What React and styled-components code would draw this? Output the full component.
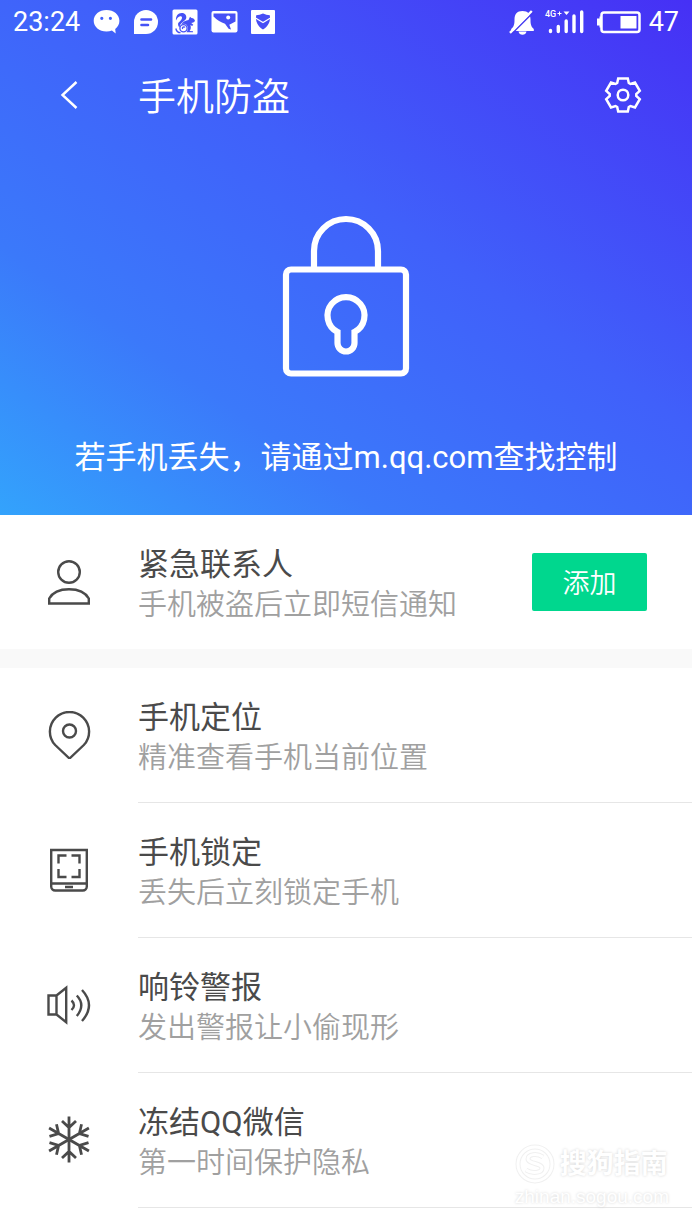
import React from "react";
import styled, { createGlobalStyle } from "styled-components";

const GlobalStyle = createGlobalStyle`
  *, *::before, *::after { box-sizing: border-box; }
  body {
    margin: 0;
    background: #fff;
    font-family: Roboto, "Noto Sans CJK SC", sans-serif;
  }
`;

const Page = styled.div`
  position: relative;
  min-height: 100vh;
  overflow: hidden;
  background: #fff;
`;

const Hero = styled.header`
  display: flex;
  flex-direction: column;
  padding-bottom: 37px;
  color: #fff;
  background: linear-gradient(35deg, #33a3fc 0%, #3b79fa 27%, #4060fa 57%, #4630f5 100%);
`;

const StatusBar = styled.div`
  display: flex;
  align-items: center;
  justify-content: space-between;
  height: 44px;
  padding: 0 13px;
  font-size: 27px;
  line-height: 44px;
  font-weight: 400;
`;

const StatusGroup = styled.div`
  display: flex;
  align-items: center;
  gap: ${(p) => p.$gap}px;
`;

const NavBar = styled.nav`
  display: grid;
  grid-template-columns: 138px 1fr 138px;
  align-items: center;
  height: 102px;
`;

const Title = styled.h1`
  margin: 0;
  padding-top: 4px;
  font-size: 38px;
  line-height: 56px;
  font-weight: 350;
`;

const IconButton = styled.button`
  display: flex;
  justify-self: center;
  padding: 8px;
  border: 0;
  background: none;
  color: inherit;
  cursor: pointer;
`;

const LockArt = styled.div`
  display: flex;
  justify-content: center;
  padding: 69px 0 61px;
`;

const Hint = styled.p`
  margin: 0;
  font-size: 31px;
  line-height: 40px;
  font-weight: 400;
  text-align: center;
`;

const List = styled.ul`
  margin: 0;
  padding: 0;
  list-style: none;
`;

const RowIcon = styled.div`
  display: flex;
  align-items: center;
  justify-content: center;
  color: #4a4a4a;
`;

const Row = styled.div`
  display: grid;
  grid-template-columns: 138px 1fr;
  height: 134px;
`;

const FeatureRow = styled(Row).attrs({ as: "li" })`
  height: 135px;

  ${RowIcon} {
    padding-bottom: 1px;
  }
`;

const RowBody = styled.div`
  display: flex;
  align-items: center;
  justify-content: space-between;
  padding-right: 45px;
  border-bottom: ${(p) => (p.$divided ? "1px solid #e6e6e6" : "0")};
`;

const RowText = styled.div`
  padding-top: 6px;
`;

const RowTitle = styled.h2`
  margin: 0;
  font-size: 31px;
  line-height: 40px;
  font-weight: 400;
  color: #4a4a4a;
`;

const RowNote = styled.p`
  margin: 0;
  font-size: 29px;
  line-height: 40px;
  font-weight: 350;
  color: #a0a0a0;
`;

const AddButton = styled.button`
  width: 115px;
  height: 58px;
  padding: 4px 0 0;
  border: 0;
  border-radius: 2px;
  background: #00d78e;
  color: #fff;
  font: 350 27px/54px Roboto, "Noto Sans CJK SC", sans-serif;
  cursor: pointer;
`;

const Band = styled.div`
  height: 19px;
  background: #f9f9f9;
`;

const Watermark = styled.div`
  position: absolute;
  right: 23px;
  bottom: 20px;
  display: flex;
  flex-direction: column;
  color: #fff;
  text-shadow: 0 0 3px #d4d4d4;
  pointer-events: none;
`;

const WatermarkBrand = styled.div`
  display: flex;
  align-items: center;
  gap: 5px;
  font-size: 27px;
  line-height: 40px;
  font-weight: 700;
`;

const WatermarkSite = styled.div`
  font: 400 19px/26px "Liberation Sans", sans-serif;
`;

const ChatIcon = () => (
  <svg width="27" height="26" viewBox="0 0 27 26" aria-hidden="true">
    <path fill="#fff" fillRule="evenodd" d="M13.5 1C6.3 1 .7 5.6.7 11.7S6.3 22.5 13.5 22.5c2 0 3.800-.3 5.400-.9l3.800 3-.5-4.700c2.700-2 4.200-4.900 4.200-8.200C26.400 5.600 20.700 1 13.500 1ZM8.800 7.700a1.600 1.600 0 1 1 0 3.200 1.600 1.600 0 0 1 0-3.200Zm8.600 0a1.600 1.600 0 1 1 0 3.200 1.600 1.600 0 0 1 0-3.200Z" />
  </svg>
);

const MessageIcon = () => (
  <svg width="26" height="26" viewBox="0 0 26 26" aria-hidden="true">
    <path fill="#fff" d="M13 1a12 12 0 0 1 0 24H1V13A12 12 0 0 1 13 1Z" />
    <path stroke="#4552f6" strokeWidth="2.600" strokeLinecap="round" d="M8.500 10.500h9.500M8.500 16h6.500" />
  </svg>
);

const SquirrelIcon = () => (
  <svg width="26" height="26" viewBox="0 0 26 26" aria-hidden="true">
    <rect x="0.500" y="0.500" width="25" height="25" rx="1.500" fill="#fff" />
    <path fill="#4551f6" d="M4 11.500C3.600 7 6 4 9.600 4c3 0 4.900 2 4.700 4.600-.2 2.700-2.900 3.700-4.900 5.600-1.300 1.300-1.900 2.700-1.600 4.400-1.600-1.200-2-2.700-1.600-4.600C8 11.700 9.800 11 10 8.900c.1-1.200-.7-1.800-1.900-1.600-1.700.3-2.800 1.900-4.100 4.200ZM16.500 11l1.500-3.300 1.500 1.300c2.200.2 3.300 1.600 3.500 3-.8 1.400-2.400 1.700-3.800 1.900l2.100 1.800-1.200 1.300-1.700-1.100c.9 2.700.3 4.600-.8 6l3.400.3v1.100h-6.500c1.900-2.700 1.800-5.600-.1-7.500-1.700-1.500-3.500-1.300-5-.3 1.500-3.100 4.600-3.900 7.100-4.500Z" />
    <circle cx="11.500" cy="19.300" r="3.600" fill="none" stroke="#4551f6" strokeWidth="1.300" />
    <path fill="none" stroke="#4551f6" strokeWidth="1.300" d="M13.200 18.200c-1.600-1-3.300.2-2.600 1.700M3.800 19.500c.6 2.600 2.200 4.200 4.700 4.200" />
  </svg>
);

const PictureIcon = () => (
  <svg width="27" height="26" viewBox="0 0 27 26" aria-hidden="true">
    <rect x="0.500" y="2" width="26" height="21.500" rx="2" fill="#fff" />
    <path fill="#4650f6" d="M2.500 4.500H24.500v8l-6.200 3.300 1.700 4.700-2.400-.8-3.600-4.900C10 13 6 11.500 2.500 7.500Z" />
    <circle cx="17.200" cy="8.400" r="2" fill="#fff" />
  </svg>
);

const MailShieldIcon = () => (
  <svg width="24" height="26" viewBox="0 0 24 26" aria-hidden="true">
    <rect y="1" width="24" height="24" rx="1" fill="#fff" />
    <path fill="#474df6" d="M12 4.500c2.200 1 4.500 1.500 6.800 1.700 1 5.800-1.300 11-6.800 14.300-5.500-3.300-7.800-8.500-6.800-14.300 2.300-.2 4.600-.7 6.800-1.700Z" />
    <path fill="none" stroke="#fff" strokeWidth="1.200" d="m4.500 9 7.500 4.500L19.500 9" />
  </svg>
);

const MutedIcon = () => (
  <svg width="28" height="28" viewBox="0 0 28 28" aria-hidden="true">
    <path fill="#fff" d="M13.500 3c5.500 0 8 3.300 8 8.500 0 4.800.6 7 3.300 9.500v2H2.200v-2C5 18.500 5.500 16.300 5.500 11.500 5.500 6.300 8 3 13.500 3ZM9.500 23.500h8c-.5 2.300-2 3.200-4 3.200s-3.500-.9-4-3.200Z" />
    <path stroke="#4338f2" strokeWidth="1.600" d="M2.300 26.300 24.600 4" />
    <path stroke="#fff" strokeWidth="2.400" d="M1 24.800 22.800 3" />
  </svg>
);

const SignalIcon = () => (
  <svg width="44" height="26" viewBox="0 0 44 26" aria-hidden="true">
    <g stroke="#fff" strokeWidth="3.400" strokeLinecap="round">
      <path d="M5.500 21.500v1M13.300 17.500v5M21.200 12v10.500M29 7v15.500M36.700 3v19.500" />
    </g>
    <path fill="#fff" d="M18.500 2.500h6l-3 3.500Z" />
    <text x="0" y="8" fill="#fff" fontSize="9" fontWeight="500">4G</text>
    <path stroke="#fff" d="M12.500 4.500h4M14.500 2.500v4" />
  </svg>
);

const BatteryIcon = () => (
  <svg width="44" height="26" viewBox="0 0 44 26" aria-hidden="true">
    <path fill="#fff" d="M4 7.500v11H2.500v-2H0v-7h2.500v-2Z" />
    <rect x="4.500" y="3.500" width="38" height="19.500" rx="2.500" fill="none" stroke="#fff" strokeWidth="2.500" />
    <rect x="23.500" y="7" width="16" height="12.500" fill="#fff" />
  </svg>
);

const BackIcon = () => (
  <svg width="18" height="30" viewBox="0 0 18 30" aria-hidden="true">
    <path fill="none" stroke="currentColor" strokeWidth="2.400" d="M16.500 2 2.500 15l14 13" />
  </svg>
);

// One tooth of the gear, turned six times around the centre.
const TOOTH = [[-5.800, -12], [-4.800, -16.600], [4.800, -16.600], [5.800, -12]];
const gearPoints = [0, 1, 2, 3, 4, 5]
  .flatMap((i) => {
    const a = (i * Math.PI) / 3;
    return TOOTH.map(([x, y]) => [
      (20 + x * Math.cos(a) - y * Math.sin(a)).toFixed(2),
      (20 + x * Math.sin(a) + y * Math.cos(a)).toFixed(2),
    ].join(","));
  })
  .join(" ");

const GearIcon = () => (
  <svg width="40" height="40" viewBox="0 0 40 40" aria-hidden="true">
    <g fill="none" stroke="currentColor" strokeWidth="2.500">
      <polygon points={gearPoints} />
      <circle cx="20" cy="20" r="5.300" />
    </g>
  </svg>
);

const LockIcon = () => (
  <svg width="128" height="162" viewBox="0 0 128 162" aria-hidden="true">
    <g fill="none" stroke="#fff" strokeWidth="6.200">
      <path d="M32 54V36a32 32 0 0 1 64 0v18" />
      <rect x="4" y="54.500" width="120" height="104" rx="5" />
      <path d="M55.500 117a18.500 18.500 0 1 1 17 0v11a8.500 8.500 0 0 1-17 0Z" />
    </g>
  </svg>
);

const LineIcon = ({ children }) => (
  <svg width="48" height="48" viewBox="0 0 48 48" fill="none" stroke="currentColor" strokeWidth="2.400" aria-hidden="true">
    {children}
  </svg>
);

const PersonIcon = () => (
  <LineIcon>
    <circle cx="24" cy="14" r="10.800" />
    <path d="M4.200 45.500v-5C7.500 34.500 15 31.200 24 31.200s16.500 3.300 19.800 9.300v5Z" />
  </LineIcon>
);

const PinIcon = () => (
  <LineIcon>
    <path d="M24.500 47.500 10.200 34A19.600 19.600 0 1 1 38.800 34Z" />
    <circle cx="24.500" cy="20" r="6.500" />
  </LineIcon>
);

const PhoneLockIcon = () => (
  <LineIcon>
    <path d="M6.200 4h35.600v36.500a4 4 0 0 1-4 4H10.200a4 4 0 0 1-4-4ZM6.200 37.500h35.600M20 41h8" />
    <path d="M13.500 17.500v-8h8M26.500 9.500h8v8M34.500 23v8h-8M21.500 31h-8v-8" />
  </LineIcon>
);

const SpeakerIcon = () => (
  <LineIcon>
    <path d="M3.500 14.500h8v19h-8ZM11.500 14.500l9.700-7.700v34.400l-9.700-7.700" />
    <path d="M26.500 19.500q5 4.500 0 9.500M31.800 14.500q9 9.500 0 20.500M37 9q14 15 0 31" />
  </LineIcon>
);

const SnowIcon = () => (
  <LineIcon>
    <g strokeWidth="2.800">
      {[0, 60, 120, 180, 240, 300].map((angle) => (
        <path key={angle} transform={`rotate(${angle} 24 23.500)`} d="M24 23.500V.5M17 5 24 11.500 31 5" />
      ))}
    </g>
  </LineIcon>
);

const BrandMark = () => (
  <svg width="40" height="40" viewBox="0 0 40 40" fill="none" aria-hidden="true">
    <g stroke="#f0f0f0" strokeWidth="5">
      <circle cx="20" cy="20" r="17" />
      <path d="M28 13c-6-4-15-3-15 2s14 4 14 9-10 6-16 2" />
    </g>
    <g stroke="#fff" strokeWidth="3">
      <circle cx="20" cy="20" r="17" />
      <path d="M28 13c-6-4-15-3-15 2s14 4 14 9-10 6-16 2" />
    </g>
  </svg>
);

const FEATURES = [
  { title: "手机定位", note: "精准查看手机当前位置", Icon: PinIcon },
  { title: "手机锁定", note: "丢失后立刻锁定手机", Icon: PhoneLockIcon },
  { title: "响铃警报", note: "发出警报让小偷现形", Icon: SpeakerIcon },
  { title: "冻结QQ微信", note: "第一时间保护隐私", Icon: SnowIcon },
];

export default function App() {
  return (
    <Page lang="zh-CN">
      <GlobalStyle />
      <Hero>
        <StatusBar>
          <StatusGroup $gap={13}>
            <span>23:24</span>
            <ChatIcon />
            <MessageIcon />
            <SquirrelIcon />
            <PictureIcon />
            <MailShieldIcon />
          </StatusGroup>
          <StatusGroup $gap={8}>
            <MutedIcon />
            <SignalIcon />
            <BatteryIcon />
            <span>47</span>
          </StatusGroup>
        </StatusBar>
        <NavBar>
          <IconButton type="button" aria-label="返回">
            <BackIcon />
          </IconButton>
          <Title>手机防盗</Title>
          <IconButton type="button" aria-label="设置">
            <GearIcon />
          </IconButton>
        </NavBar>
        <LockArt>
          <LockIcon />
        </LockArt>
        <Hint>若手机丢失，请通过m.qq.com查找控制</Hint>
      </Hero>
      <main>
        <Row>
          <RowIcon>
            <PersonIcon />
          </RowIcon>
          <RowBody>
            <RowText>
              <RowTitle>紧急联系人</RowTitle>
              <RowNote>手机被盗后立即短信通知</RowNote>
            </RowText>
            <AddButton type="button">添加</AddButton>
          </RowBody>
        </Row>
        <Band />
        <List>
          {FEATURES.map(({ title, note, Icon }) => (
            <FeatureRow key={title}>
              <RowIcon>
                <Icon />
              </RowIcon>
              <RowBody $divided>
                <RowText>
                  <RowTitle>{title}</RowTitle>
                  <RowNote>{note}</RowNote>
                </RowText>
              </RowBody>
            </FeatureRow>
          ))}
        </List>
      </main>
      <Watermark>
        <WatermarkBrand>
          <BrandMark />
          搜狗指南
        </WatermarkBrand>
        <WatermarkSite>zhinan.sogou.com</WatermarkSite>
      </Watermark>
    </Page>
  );
}
